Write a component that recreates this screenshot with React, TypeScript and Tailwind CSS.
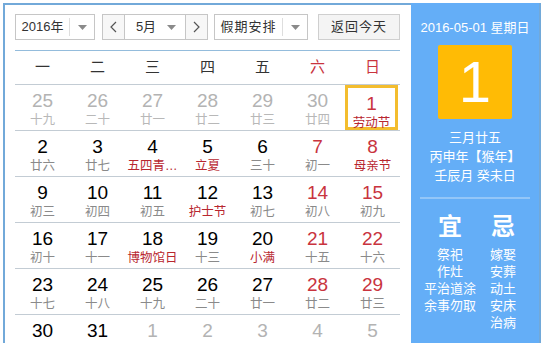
import React from 'react';

type Cell = {d: number; l: string; muted?: boolean; redNum?: boolean; redL?: boolean; today?: boolean};

const weeks: Cell[][] = [
  [
    {d: 25, l: '十九', muted: true},
    {d: 26, l: '二十', muted: true},
    {d: 27, l: '廿一', muted: true},
    {d: 28, l: '廿二', muted: true},
    {d: 29, l: '廿三', muted: true},
    {d: 30, l: '廿四', muted: true},
    {d: 1, l: '劳动节', redNum: true, redL: true, today: true},
  ],
  [
    {d: 2, l: '廿六'},
    {d: 3, l: '廿七'},
    {d: 4, l: '五四青…', redL: true},
    {d: 5, l: '立夏', redL: true},
    {d: 6, l: '三十'},
    {d: 7, l: '初一', redNum: true},
    {d: 8, l: '母亲节', redNum: true, redL: true},
  ],
  [
    {d: 9, l: '初三'},
    {d: 10, l: '初四'},
    {d: 11, l: '初五'},
    {d: 12, l: '护士节', redL: true},
    {d: 13, l: '初七'},
    {d: 14, l: '初八', redNum: true},
    {d: 15, l: '初九', redNum: true},
  ],
  [
    {d: 16, l: '初十'},
    {d: 17, l: '十一'},
    {d: 18, l: '博物馆日', redL: true},
    {d: 19, l: '十三'},
    {d: 20, l: '小满', redL: true},
    {d: 21, l: '十五', redNum: true},
    {d: 22, l: '十六', redNum: true},
  ],
  [
    {d: 23, l: '十七'},
    {d: 24, l: '十八'},
    {d: 25, l: '十九'},
    {d: 26, l: '二十'},
    {d: 27, l: '廿一'},
    {d: 28, l: '廿二', redNum: true},
    {d: 29, l: '廿三', redNum: true},
  ],
  [
    {d: 30, l: '廿四'},
    {d: 31, l: '廿五'},
    {d: 1, l: '廿六', muted: true},
    {d: 2, l: '廿七', muted: true},
    {d: 3, l: '廿八', muted: true},
    {d: 4, l: '廿九', muted: true},
    {d: 5, l: '初一', muted: true},
  ],
];

const font = {fontFamily: '"Liberation Sans", "Noto Sans CJK SC", sans-serif'};

function Caret() {
  return (
    <svg width="9" height="5" viewBox="0 0 9 5">
      <path d="M0 0h9L4.5 5z" fill="#8a8a8a" />
    </svg>
  );
}

function Chevron({dir}: {dir: 'l' | 'r'}) {
  return (
    <svg width="7" height="12" viewBox="0 0 7 12">
      <path d={dir === 'l' ? 'M6 1 1 6l5 5' : 'M1 1l5 5-5 5'} fill="none" stroke="#555" strokeWidth="1.2" />
    </svg>
  );
}

function Controls() {
  return (
    <div className="flex h-[26px] items-stretch text-[13px] text-[#333]">
      <div className="flex w-[80px] border border-[#c6c6c6] bg-white">
        <div className="flex flex-1 items-center justify-center">2016年</div>
        <div className="my-[3px] w-px bg-[#dedede]" />
        <div className="flex w-[24px] items-center justify-center">
          <Caret />
        </div>
      </div>
      <div className="ml-[7px] flex w-[106px] border border-[#c6c6c6] bg-white">
        <div className="flex w-[22px] items-center justify-center border-r border-[#c6c6c6] bg-[#f7f7f7]">
          <Chevron dir="l" />
        </div>
        <div className="flex flex-1 items-center justify-center">5月</div>
        <div className="flex w-[18px] items-center justify-start">
          <Caret />
        </div>
        <div className="flex w-[22px] items-center justify-center border-l border-[#c6c6c6] bg-[#f7f7f7]">
          <Chevron dir="r" />
        </div>
      </div>
      <div className="ml-[6px] flex w-[94px] border border-[#c6c6c6] bg-white">
        <div className="flex flex-1 items-center justify-center tracking-[1px]">假期安排</div>
        <div className="my-[3px] w-px bg-[#dedede]" />
        <div className="flex w-[24px] items-center justify-center">
          <Caret />
        </div>
      </div>
      <div className="ml-[10px] flex w-[82px] items-center justify-center border border-[#cfcfcf] bg-[#f4f4f4] tracking-[1px]">
        返回今天
      </div>
    </div>
  );
}

function DayCell({c}: {c: Cell}) {
  const num = c.muted ? 'text-[#b3b3b3]' : c.redNum ? 'text-[#c9343e]' : 'text-black';
  const lun = c.muted ? 'text-[#b8b8b8]' : c.redL ? 'text-[#b8262f]' : 'text-[#8a8a8a]';
  return (
    <div className="h-[46px] border-b border-[#c3ccd4]">
      <div
        className={
          'flex h-[45px] flex-col items-center pt-[5px] ' +
          (c.today ? 'ml-[0px] mr-[2px] border-[3px] border-[#f3bd2e] pt-[2px]' : '')
        }
      >
        <div className={'text-[19px] leading-[21px] ' + num}>{c.d}</div>
        <div className={'mt-[1px] whitespace-nowrap text-[12.5px] leading-[16px] ' + lun}>{c.l}</div>
      </div>
    </div>
  );
}

export default function App() {
  const heads = ['一', '二', '三', '四', '五', '六', '日'];
  return (
    <div className="h-[343px] overflow-hidden bg-white" style={font}>
      <div className="ml-[3px] mt-[3px] flex h-[400px] w-[538px] border-2 border-[#72a9d9]">
        <div className="w-[406px] pl-[10px] pt-[9px]">
          <Controls />
          <div className="mt-[10px] w-[385px] border-t border-[#94bcdc]" />
          <div className="w-[385px]">
            <div className="grid h-[34px] grid-cols-7 border-b border-[#c3ccd4] text-[15px]">
              {heads.map((h, i) => (
                <div
                  key={h}
                  className={'flex items-center justify-center ' + (i >= 5 ? 'text-[#c9343e]' : 'text-[#333]')}
                >
                  {h}
                </div>
              ))}
            </div>
            {weeks.map((w, wi) => (
              <div key={wi} className="grid grid-cols-7">
                {w.map((c, ci) => (
                  <DayCell key={ci} c={c} />
                ))}
              </div>
            ))}
          </div>
        </div>
        <div className="-mt-[2px] w-[128px] bg-[#64aef7] text-white">
          <div className="pt-[16px] text-center text-[13px] leading-[18px]">2016-05-01 星期日</div>
          <div className="mx-auto mt-[8px] flex h-[74px] w-[74px] items-center justify-center rounded-[2px] bg-[#ffbb05] text-[58px] leading-none">
            1
          </div>
          <div className="mt-[9px] text-center text-[13px] leading-[19px]">
            <div>三月廿五</div>
            <div>丙申年【猴年】</div>
            <div>壬辰月 癸未日</div>
          </div>
          <div className="mx-[9px] mt-[12px] border-t-2 border-[#93c6f8]" />
          <div className="mt-[14px] flex text-center">
            <div className="w-[78px]">
              <div className="text-[24px] font-bold leading-[28px]">宜</div>
              <div className="mt-[5px] text-[13px] leading-[17px]">
                <div>祭祀</div>
                <div>作灶</div>
                <div>平治道涂</div>
                <div>余事勿取</div>
              </div>
            </div>
            <div className="w-[28px] whitespace-nowrap">
              <div className="text-[24px] font-bold leading-[28px]">忌</div>
              <div className="mt-[5px] text-[13px] leading-[17px]">
                <div>嫁娶</div>
                <div>安葬</div>
                <div>动土</div>
                <div>安床</div>
                <div>治病</div>
              </div>
            </div>
          </div>
        </div>
      </div>
    </div>
  );
}
